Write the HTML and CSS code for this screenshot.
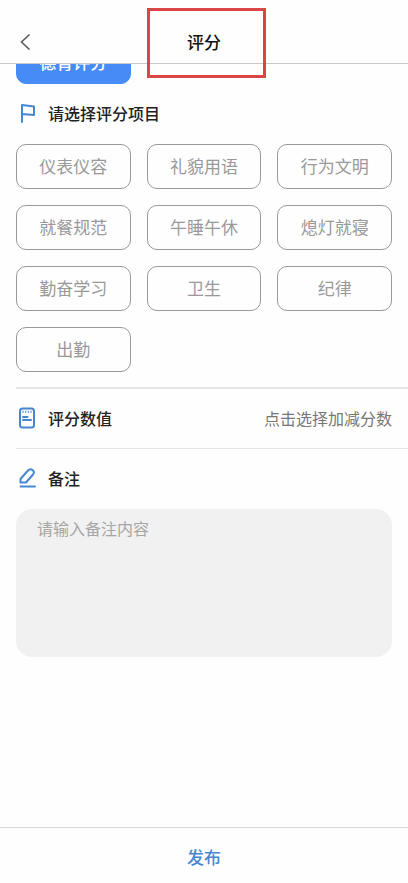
FILE: index.html
```html
<!DOCTYPE html>
<html lang="zh-CN">
<head>
<meta charset="utf-8">
<meta name="viewport" content="width=device-width, initial-scale=1">
<title>评分</title>
<link rel="stylesheet" href="styles.css">
</head>
<body>
<div class="page">
  <header class="header">
    <button class="back" type="button" aria-label="返回">
      <svg width="12" height="18" viewBox="0 0 12 18"><path d="M9.500 1.500 1.500 9l8 7.500"/></svg>
    </button>
    <h1 class="title">评分</h1>
    <span class="marker"></span>
  </header>

  <main class="content">
    <div class="types">
      <button class="option active" type="button">德育评分</button>
    </div>

    <h2 class="heading">
      <svg class="icon" viewBox="0 0 22 22"><path d="M6 20V3l12 1.500V13L6 12"/></svg>
      请选择评分项目
    </h2>
    <div class="options">
      <button class="option" type="button">仪表仪容</button>
      <button class="option" type="button">礼貌用语</button>
      <button class="option" type="button">行为文明</button>
      <button class="option" type="button">就餐规范</button>
      <button class="option" type="button">午睡午休</button>
      <button class="option" type="button">熄灯就寝</button>
      <button class="option" type="button">勤奋学习</button>
      <button class="option" type="button">卫生</button>
      <button class="option" type="button">纪律</button>
      <button class="option" type="button">出勤</button>
    </div>

    <div class="score">
      <h2 class="heading">
        <svg class="icon" viewBox="0 0 22 22"><rect x="4" y="1.500" width="14" height="19" rx="2.500"/><path d="M7 10h4.500M7 13h8"/><path class="dots" d="M7 4v1.500M9.700 4v1.500M12.300 4v1.500M15 4v1.500"/></svg>
        评分数值
      </h2>
      <button class="picker" type="button">点击选择加减分数</button>
    </div>

    <label class="heading memo-label" for="memo">
      <svg class="icon" viewBox="0 0 22 22"><path d="M4.500 15.500V12L12 3.500C13.500 2 15.500 2 16.800 3.200C18.200 4.500 18 6.300 17 7.500L10 15.500z M4.500 19.500h14.500"/></svg>
      备注
    </label>
    <textarea class="memo" id="memo" placeholder="请输入备注内容"></textarea>
  </main>

  <footer class="footer">
    <button class="publish" type="button">发布</button>
  </footer>
</div>
</body>
</html>
```

FILE: styles.css
```css
* {
  box-sizing: border-box;
}

body {
  margin: 0;
  background: #fefefe;
  color: #222;
}

body,
button,
textarea {
  font-family: "Noto Sans CJK SC", sans-serif;
  font-size: 16px;
  line-height: 24px;
}

button {
  margin: 0;
  padding: 0 0 2px;
  border: 0;
  background: none;
  cursor: pointer;
}

svg {
  display: block;
  fill: none;
  stroke: #555;
  stroke-width: 1.5;
}

.page {
  display: flex;
  flex-direction: column;
  min-height: 100vh;
}

.header {
  position: relative;
  display: grid;
  grid-template-columns: 1fr auto 1fr;
  align-items: center;
  padding: 20px 16px 0;
  height: 64px;
  border-bottom: 1px solid #c8c8c8;
}

.back {
  justify-self: start;
  padding: 0 4px;
}

.title {
  margin: 0;
  color: #111;
  font-size: 17px;
  font-weight: 500;
}

/* Highlight frame over the page title */
.marker {
  position: absolute;
  top: 8px;
  left: 50%;
  width: 119px;
  height: 70px;
  margin-left: -57px;
  border: 3px solid #dc4545;
  pointer-events: none;
}

.content {
  flex: 1;
  padding: 0 16px;
}

/* The type row is scrolled under the header */
.types,
.options {
  display: grid;
  grid-template-columns: repeat(3, 1fr);
  gap: 16px;
}

.types {
  align-content: end;
  height: 20px;
  overflow: hidden;
}

.option {
  height: 45px;
  border: 1px solid #999;
  border-radius: 10px;
  color: #999;
  font-size: 17px;
}

.option.active {
  padding: 0;
  border-color: #478cf6;
  background: #478cf6;
  color: #fff;
  font-weight: 500;
}

.heading {
  display: flex;
  align-items: center;
  gap: 10px;
  margin: 0;
  height: 60px;
  padding-bottom: 2px;
  color: #222;
  font-size: 16px;
  font-weight: 500;
}

.icon {
  width: 22px;
  height: 22px;
  stroke: #4786d2;
  stroke-width: 2;
  stroke-linejoin: round;
  stroke-linecap: round;
}

.dots {
  stroke-width: 1;
}

.score {
  display: flex;
  align-items: center;
  justify-content: space-between;
  margin: 15px -16px 0 0;
  padding-right: 16px;
  border-top: 2px solid #e6e6e6;
  border-bottom: 1px solid #e6e6e6;
}

.score .heading {
  height: 59px;
}

.picker {
  color: #777;
}

.memo {
  display: block;
  width: 100%;
  height: 148px;
  padding: 7px 21px;
  border: 0;
  border-radius: 16px;
  background: #f1f1f1;
  color: #222;
  resize: none;
}

.memo::placeholder {
  color: #a5a5a5;
}

.footer {
  display: grid;
  height: 56px;
  padding-top: 4px;
  border-top: 1px solid #d8dada;
}

.publish {
  color: #4786d2;
  font-size: 17px;
  font-weight: 500;
}
```
